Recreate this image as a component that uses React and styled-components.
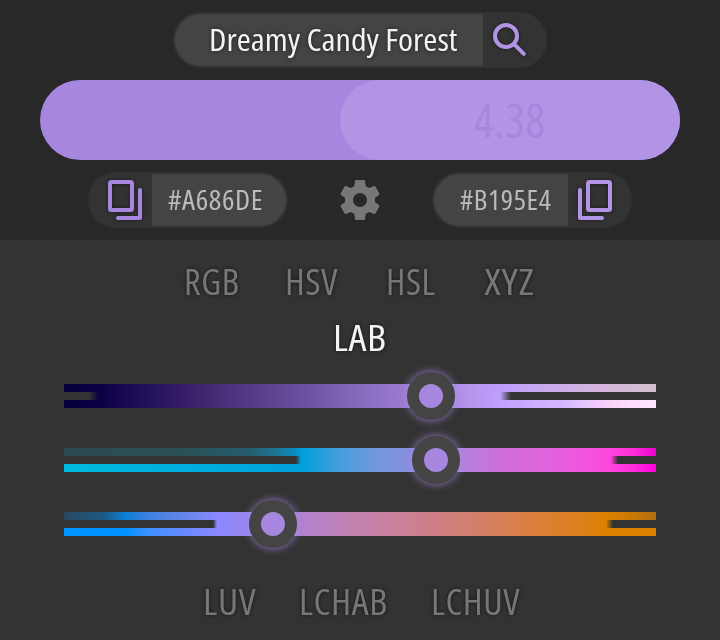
import React, { useLayoutEffect, useRef, useState } from "react";
import styled, { createGlobalStyle } from "styled-components";

const GlobalStyle = createGlobalStyle`
  * { box-sizing: border-box; }
  html, body { margin: 0; background: #333; overflow: hidden; }
  body { font-family: "Open Sans", "Noto Sans", sans-serif; font-stretch: 75%; font-weight: 480; }
  button { border: 0; padding: 0; background: none; font: inherit; font-stretch: inherit; color: inherit; }
`;

const FIRST = "#a686de";
const SECOND = "#b195e4";

const Page = styled.main`
  width: 720px;
  height: 640px;
  background: #333;
`;

const Header = styled.header`
  height: 240px;
  padding-top: 12px;
  background: #282828;
  display: flex;
  flex-direction: column;
  align-items: center;
`;

const Pill = styled.div`
  display: flex;
  height: 56px;
  width: ${(p) => p.$width}px;
  padding: 2px;
  border-radius: 28px;
  background: #333;
  overflow: hidden;
`;

const Field = styled.div`
  width: ${(p) => p.$width}px;
  height: 52px;
  padding-left: ${(p) => p.$inset}px;
  display: flex;
  align-items: center;
  background: #444;
  color: ${(p) => p.$color};
  border-radius: ${(p) => (p.$round === "left" ? "26px 0 0 26px" : "0 26px 26px 0")};
`;

const IconButton = styled.button`
  display: flex;
  flex: 1;
  align-items: center;
  justify-content: center;
  color: ${(p) => p.$color};
  svg { display: block; filter: drop-shadow(0 0 2px rgba(0, 0, 0, 0.45)); }
`;

const Swatches = styled.div`
  display: flex;
  justify-content: flex-end;
  width: 640px;
  height: 80px;
  margin: 12px 0;
  border-radius: 40px;
  background: ${FIRST};
`;

const SecondSwatch = styled.div`
  display: flex;
  align-items: center;
  justify-content: center;
  width: 340px;
  border-radius: 40px;
  background: ${SECOND};
  color: ${FIRST};
`;

const Codes = styled.div`
  display: flex;
  width: 544px;
  justify-content: space-between;
`;

const Settings = styled.button`
  width: 48px;
  color: #777;
  display: flex;
  align-items: center;
`;

const TextBox = styled.span`
  display: block;
  flex: none;
  width: ${(p) => p.$width}px;
  height: ${(p) => p.$size * 1.4}px;
  line-height: ${(p) => p.$size * 1.4}px;
  font-size: ${(p) => p.$size}px;
  letter-spacing: ${(p) => p.$spacing || 0}em;
  white-space: nowrap;
  text-align: left;
  text-shadow: ${(p) => (p.$shadow ? "0 0 4px rgba(0, 0, 0, 0.6)" : "none")};
`;

const TextRun = styled.span`
  display: inline-block;
  transform-origin: 0 50%;
`;

function FitText({ children, width, size, shadow, spacing }) {
  const ref = useRef(null);
  const [scale, setScale] = useState(1);
  useLayoutEffect(() => {
    setScale(width / ref.current.offsetWidth);
  }, [width, size, children]);
  return (
    <TextBox $width={width} $size={size} $shadow={shadow} $spacing={spacing}>
      <TextRun ref={ref} style={{ transform: `scaleX(${scale})` }}>
        {children}
      </TextRun>
    </TextBox>
  );
}

const Modes = styled.nav`
  display: flex;
  height: 56px;
  align-items: center;
  justify-content: center;
  gap: ${(p) => p.$gap || 0}px;
  padding-left: ${(p) => p.$inset || 0}px;
`;

const Mode = styled.button`
  display: flex;
  justify-content: center;
  min-width: ${(p) => p.$cell || 0}px;
  color: ${(p) => (p.$active ? "#f3f3f3" : "#777")};
`;

const Panel = styled.section`
  padding-top: 14px;
`;

const Sliders = styled.div`
  display: flex;
  flex-direction: column;
  gap: 40px;
  padding: 18px 64px 38px;
`;

const Track = styled.div`
  position: relative;
  display: grid;
  grid-template-rows: repeat(3, 8px);
`;

const Band = styled.div`
  background: ${(p) => p.$fill};
`;

const Middle = styled(Band)`
  mask-image: ${(p) => p.$mask};
`;

const Thumb = styled.div`
  position: absolute;
  top: -12px;
  width: 48px;
  height: 48px;
  border: 12px solid #444;
  border-radius: 50%;
  background: ${FIRST};
  background-clip: padding-box;
  box-shadow: 0 0 9px rgba(166, 134, 222, 0.85);
`;

const gradient = (stops) =>
  `linear-gradient(to right, ${stops.map(([x, c]) => `${c} ${x}px`).join(", ")})`;

const channels = [
  {
    value: 367,
    range: [25, 35, 436, 447],
    low: [[0, "#06003a"], [35, "#0b0044"], [60, "#180850"], [100, "#2a1760"], [140, "#41256f"], [186, "#553b86"], [236, "#6a4e9e"], [300, "#886cbf"], [367, "#a686de"], [416, "#b898f0"]],
    topStart: [],
    bottomStart: [],
    topEnd: [[440, "#c09ffc"], [480, "#c8aaec"], [540, "#d6b6dc"], [592, "#d0c0cb"]],
    bottomEnd: [[440, "#c2a2ff"], [500, "#d6b8ff"], [550, "#fcd4fa"], [592, "#ffe8ff"]],
  },
  {
    value: 372,
    range: [232, 237, 547, 554],
    low: [[239, "#00a0dd"], [270, "#3c9fdd"], [310, "#7098dd"], [350, "#8c8edf"], [372, "#a686de"], [400, "#b482de"], [430, "#cb70dc"], [480, "#e065dd"], [530, "#f650dd"], [547, "#ff44dd"]],
    topStart: [[0, "#2e4a50"], [120, "#295056"], [186, "#255e6d"], [215, "#1a7898"], [232, "#088fc5"]],
    bottomStart: [[0, "#00bbdd"], [100, "#00b0dd"], [232, "#00a0dd"]],
    topEnd: [[570, "#ff2cd9"], [592, "#ec00cc"]],
    bottomEnd: [[570, "#ff2cdd"], [592, "#ff00dd"]],
  },
  {
    value: 209,
    range: [149, 153, 542, 549],
    low: [[155, "#8c88ff"], [185, "#9b86f0"], [209, "#a686de"], [250, "#b582c8"], [290, "#c181b0"], [340, "#ca8098"], [400, "#d27f74"], [460, "#da8044"], [520, "#dd8018"], [540, "#dd8000"]],
    topStart: [[0, "#2a4860"], [40, "#1e5a85"], [62, "#0c80d8"], [85, "#4080e0"], [110, "#5a84e6"], [150, "#8688fb"]],
    bottomStart: [[0, "#0095ff"], [62, "#0092ff"], [85, "#4090ff"], [120, "#668aff"]],
    topEnd: [[570, "#c97806"], [592, "#b46c10"]],
    bottomEnd: [[592, "#dd8000"]],
  },
];

function Channel({ value, range, low, topStart, topEnd, bottomStart, bottomEnd }) {
  const [a, b, c, d] = range;
  return (
    <Track>
      <Band $fill={gradient([...topStart, ...low, ...topEnd])} />
      <Middle
        $fill={gradient([...low, ...bottomEnd])}
        $mask={`linear-gradient(to right, transparent ${a}px, #000 ${b}px, #000 ${c}px, transparent ${d}px)`}
      />
      <Band $fill={gradient([...bottomStart, ...low, ...bottomEnd])} />
      <Thumb style={{ left: value - 24 }} />
    </Track>
  );
}

function SearchIcon() {
  return (
    <svg width="36" height="36" viewBox="0 0 36 36" fill="none" stroke="currentColor" strokeWidth="4" strokeLinecap="round">
      <circle cx="14" cy="14" r="11" />
      <path d="M24 24l7.8 7.8" />
    </svg>
  );
}

const IconFrame = styled.svg`
  transform: ${(p) => (p.$flip ? "scaleX(-1)" : "none")};
`;

function CopyIcon({ flip }) {
  return (
    <IconFrame $flip={flip} width="34" height="40" viewBox="0 0 34 40" fill="none" stroke="currentColor" strokeWidth="4" strokeLinecap="round" strokeLinejoin="round">
      <rect x="2" y="2" width="22" height="28" rx="1.5" />
      <path d="M32 10v28H10" />
    </IconFrame>
  );
}

function GearIcon() {
  return (
    <svg width="48" height="48" viewBox="0 0 24 24" fill="currentColor">
      <path d="M12 15.5A3.5 3.5 0 0 1 8.5 12 3.5 3.5 0 0 1 12 8.5a3.5 3.5 0 0 1 3.5 3.5 3.5 3.5 0 0 1-3.5 3.5m7.43-2.53c.04-.32.07-.64.07-.97 0-.33-.03-.66-.07-1l2.11-1.63c.19-.15.24-.42.12-.64l-2-3.46c-.12-.22-.39-.31-.61-.22l-2.49 1c-.52-.39-1.06-.73-1.69-.98l-.37-2.65A.506.506 0 0 0 14 2h-4c-.25 0-.46.18-.5.42l-.37 2.65c-.63.25-1.17.59-1.69.98l-2.49-1c-.22-.09-.49 0-.61.22l-2 3.46c-.13.22-.07.49.12.64L4.57 11c-.04.34-.07.67-.07 1 0 .33.03.65.07.97l-2.11 1.66c-.19.15-.25.42-.12.64l2 3.46c.12.22.39.3.61.22l2.49-1.01c.52.4 1.06.74 1.69.99l.37 2.65c.04.24.25.42.5.42h4c.25 0 .46-.18.5-.42l.37-2.65c.63-.26 1.17-.59 1.69-.99l2.49 1.01c.22.08.49 0 .61-.22l2-3.46c.12-.22.07-.49-.12-.64l-2.11-1.66Z" />
    </svg>
  );
}

const SearchButton = styled(IconButton)`
  justify-content: flex-start;
  padding: 0 0 1px 9px;
`;

const CopyButton = styled(IconButton)`
  padding-${(p) => p.$side}: 8px;
`;

export default function App() {
  return (
    <Page>
      <GlobalStyle />
      <Header>
        <Pill $width={374}>
          <Field $width={308} $inset={33.5} $color="#f3f3f3" $round="left">
            <FitText width={248.5} size={31} shadow>Dreamy Candy Forest</FitText>
          </Field>
          <SearchButton $color={SECOND} aria-label="Search"><SearchIcon /></SearchButton>
        </Pill>
        <Swatches>
          <SecondSwatch>
            <FitText width={72} size={48} spacing={0.015}>4.38</FitText>
          </SecondSwatch>
        </Swatches>
        <Codes>
          <Pill $width={200}>
            <CopyButton $color={FIRST} $side="left" aria-label="Copy first color"><CopyIcon /></CopyButton>
            <Field $width={134} $inset={15.5} $color="#bbb" $round="right">
              <FitText width={95} size={27} spacing={0.02}>#A686DE</FitText>
            </Field>
          </Pill>
          <Settings aria-label="Settings"><GearIcon /></Settings>
          <Pill $width={200}>
            <Field $width={134} $inset={25.5} $color="#bbb" $round="left">
              <FitText width={92} size={27} spacing={0.02}>#B195E4</FitText>
            </Field>
            <CopyButton $color={SECOND} $side="right" aria-label="Copy second color"><CopyIcon flip /></CopyButton>
          </Pill>
        </Codes>
      </Header>
      <Panel>
        <Modes>
          <Mode $cell={99.5}><FitText width={56} size={36} spacing={0.015} shadow>RGB</FitText></Mode>
          <Mode $cell={99.5}><FitText width={53} size={36} spacing={0.015} shadow>HSV</FitText></Mode>
          <Mode $cell={99.5}><FitText width={50} size={36} spacing={0.015} shadow>HSL</FitText></Mode>
          <Mode $cell={97}><FitText width={50} size={36} spacing={0.015} shadow>XYZ</FitText></Mode>
        </Modes>
        <Modes>
          <Mode $active><FitText width={54} size={36} spacing={0.015} shadow>LAB</FitText></Mode>
        </Modes>
        <Sliders>
          {channels.map((c) => <Channel key={c.value} {...c} />)}
        </Sliders>
        <Modes $gap={43} $inset={2.5}>
          <Mode><FitText width={53} size={36} spacing={0.015} shadow>LUV</FitText></Mode>
          <Mode><FitText width={89} size={36} spacing={0.015} shadow>LCHAB</FitText></Mode>
          <Mode><FitText width={89} size={36} spacing={0.015} shadow>LCHUV</FitText></Mode>
        </Modes>
      </Panel>
    </Page>
  );
}
